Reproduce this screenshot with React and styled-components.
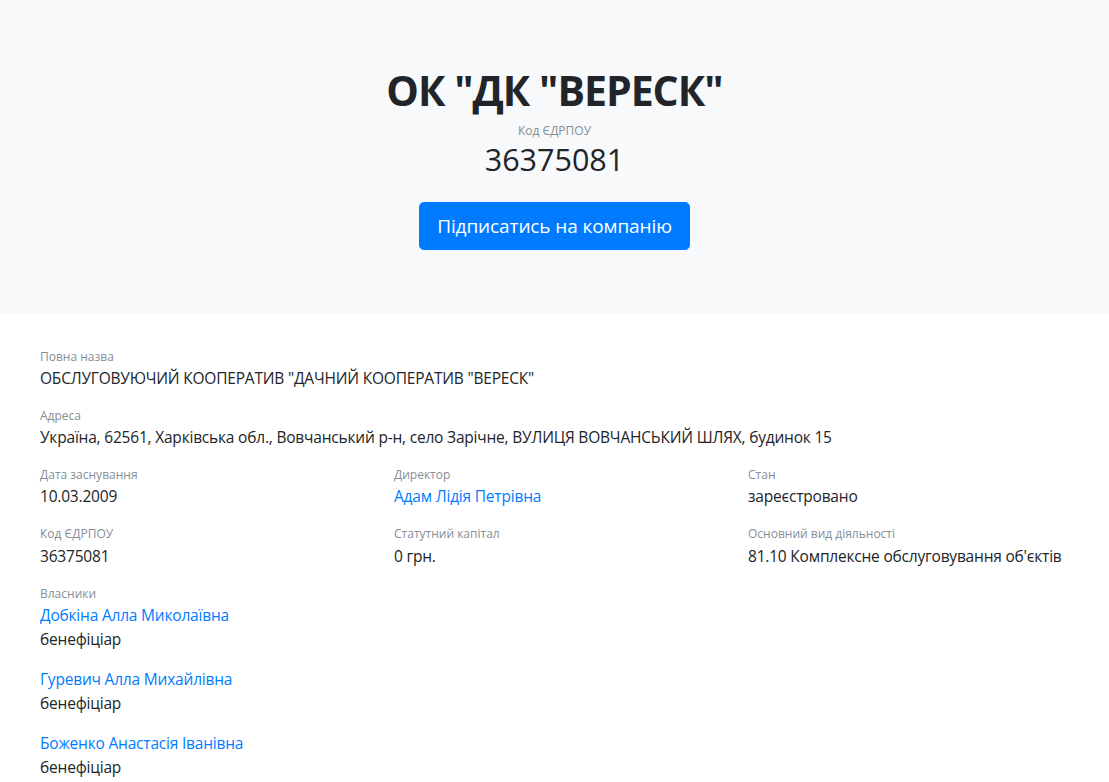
import React from "react";
import styled, { createGlobalStyle } from "styled-components";

const Global = createGlobalStyle`
  html, body { margin: 0; padding: 0; background: #fff; }
  body {
    font-family: "Open Sans", "Noto Sans", sans-serif;
    color: #212529;
    font-size: 15.5px;
    line-height: 1.5;
  }
  * { box-sizing: border-box; }
`;

const Hero = styled.header`
  background: #f8f9fa;
  padding: 64px 32px 64px;
  display: flex;
  flex-direction: column;
  align-items: center;
  text-align: center;
`;

const Title = styled.h1`
  margin: 0;
  font-size: 41px;
  line-height: 52.8px;
  letter-spacing: -1px;
  font-weight: 700;
  color: #212529;
`;

const CodeLabel = styled.div`
  margin-top: 4px;
  font-size: 12px;
  line-height: 19px;
  color: #868e96;
`;

const CodeValue = styled.div`
  font-size: 30.5px;
  line-height: 38px;
  font-weight: 500;
  color: #212529;
`;

const SubscribeButton = styled.button`
  margin-top: 24px;
  font-family: inherit;
  font-size: 19px;
  letter-spacing: -0.1px;
  line-height: 30px;
  padding: 8px 17px;
  height: 48px;
  color: #fff;
  background: #007bff;
  border: 1px solid #007bff;
  border-radius: 4.8px;
  cursor: pointer;
`;

const Details = styled.main`
  padding: 33px 25px 0;
  display: grid;
  grid-template-columns: repeat(3, 354px);
`;

const Field = styled.div`
  padding: 0 15px;
  margin-bottom: 16px;
  grid-column: ${(p) => (p.$wide ? "1 / -1" : "auto")};
`;

const Label = styled.div`
  font-size: 12px;
  line-height: 19.2px;
  color: #868e96;
`;

const Value = styled.div`
  font-size: 15.5px;
  letter-spacing: -0.2px;
  line-height: 24px;
  color: #212529;
`;

const LinkValue = styled.a`
  display: block;
  font-size: 15.5px;
  letter-spacing: -0.2px;
  line-height: 24px;
  color: #007bff;
  text-decoration: none;
`;

const Owner = styled.div`
  margin-bottom: 16px;
  &:last-child { margin-bottom: 0; }
`;

const owners = [
  "Добкіна Алла Миколаївна",
  "Гуревич Алла Михайлівна",
  "Боженко Анастасія Іванівна",
];

export default function App() {
  return (
    <>
      <Global />
      <Hero>
        <Title>ОК "ДК "ВЕРЕСК"</Title>
        <CodeLabel>Код ЄДРПОУ</CodeLabel>
        <CodeValue>36375081</CodeValue>
        <SubscribeButton>Підписатись на компанію</SubscribeButton>
      </Hero>
      <Details>
        <Field $wide>
          <Label>Повна назва</Label>
          <Value>ОБСЛУГОВУЮЧИЙ КООПЕРАТИВ "ДАЧНИЙ КООПЕРАТИВ "ВЕРЕСК"</Value>
        </Field>
        <Field $wide>
          <Label>Адреса</Label>
          <Value>
            Україна, 62561, Харківська обл., Вовчанський р-н, село Зарічне, ВУЛИЦЯ ВОВЧАНСЬКИЙ ШЛЯХ, будинок 15
          </Value>
        </Field>
        <Field>
          <Label>Дата заснування</Label>
          <Value>10.03.2009</Value>
        </Field>
        <Field>
          <Label>Директор</Label>
          <LinkValue href="#">Адам Лідія Петрівна</LinkValue>
        </Field>
        <Field>
          <Label>Стан</Label>
          <Value>зареєстровано</Value>
        </Field>
        <Field>
          <Label>Код ЄДРПОУ</Label>
          <Value>36375081</Value>
        </Field>
        <Field>
          <Label>Статутний капітал</Label>
          <Value>0 грн.</Value>
        </Field>
        <Field>
          <Label>Основний вид діяльності</Label>
          <Value>81.10 Комплексне обслуговування об'єктів</Value>
        </Field>
        <Field $wide>
          <Label>Власники</Label>
          {owners.map((name) => (
            <Owner key={name}>
              <LinkValue href="#">{name}</LinkValue>
              <Value>бенефіціар</Value>
            </Owner>
          ))}
        </Field>
      </Details>
    </>
  );
}
